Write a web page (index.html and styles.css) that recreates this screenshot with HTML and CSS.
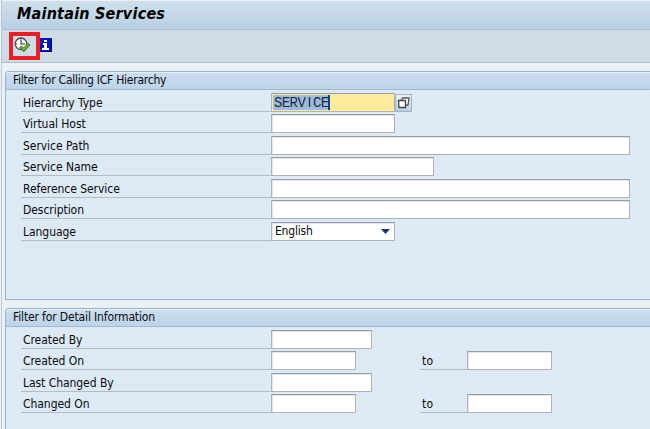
FILE: index.html
```
<!DOCTYPE html>
<html lang="en">
<head>
<meta charset="utf-8">
<title>Maintain Services</title>
<link rel="stylesheet" href="styles.css">
</head>
<body>
<div class="window">
  <h1 class="title">Maintain Services</h1>
  <div class="toolbar">
    <div class="execute">
      <svg width="17" height="16" viewBox="0 0 17 16">
        <circle cx="7" cy="6.8" r="5.8" fill="#fff" stroke="#4b4b48" stroke-width="1.3"/>
        <path d="M7 3v4h4M7 1.8v1M2 7h1M7 10.8v1" fill="none" stroke="#333" stroke-width="1.1"/>
        <path d="M6.3 9.6l3.4 3.3 5.4-6" fill="none" stroke="#3c6a26" stroke-width="3.4"/>
        <path d="M6.9 10.1l2.8 2.5 4.9-5.3" fill="none" stroke="#6eb43c" stroke-width="2"/>
      </svg>
    </div>
    <svg class="info" width="12" height="14" viewBox="0 0 12 14">
      <path fill="#0712c6" d="M0 0h12v14H0z"/>
      <path fill="#fff" d="M4 2h3v2H4zM3 5h4v5h2v2H2v-2h2V7H3z"/>
      <path fill="none" stroke="#000d68" d="M0 13.5h11.5V0"/>
    </svg>
  </div>
  <section class="panel hierarchy">
    <h2>Filter for Calling ICF Hierarchy</h2>
    <div class="rows">
      <div class="row"><label>Hierarchy Type</label><div class="field medium active"><span class="selected">SERV<span class="narrow">I</span>CE</span></div><div class="help"><svg width="13" height="12" viewBox="0 0 13 12"><path d="M4.5 3L5.5 1h6.500l-1 7H9" fill="#fff" stroke="#555" stroke-width="1.3"/><path d="M1.5 3.500h7v7h-6.500z" fill="#fff" stroke="#444" stroke-width="1.3"/></svg></div></div>
      <div class="row"><label>Virtual Host</label><div class="field medium"></div></div>
      <div class="row"><label>Service Path</label><div class="field full"></div></div>
      <div class="row"><label>Service Name</label><div class="field name"></div></div>
      <div class="row"><label>Reference Service</label><div class="field full"></div></div>
      <div class="row"><label>Description</label><div class="field full"></div></div>
      <div class="row"><label>Language</label><div class="field medium select"><span>English</span><svg width="9" height="5" viewBox="0 0 9 5"><path d="M0 0h9L4.5 5z" fill="#1c3566"/></svg></div></div>
    </div>
  </section>
  <section class="panel detail">
    <h2>Filter for Detail Information</h2>
    <div class="rows">
      <div class="row"><label>Created By</label><div class="field user"></div></div>
      <div class="row"><label>Created On</label><div class="field date"></div><label class="to">to</label><div class="field date"></div></div>
      <div class="row"><label>Last Changed By</label><div class="field user"></div></div>
      <div class="row"><label>Changed On</label><div class="field date"></div><label class="to">to</label><div class="field date"></div></div>
    </div>
  </section>
</div>
</body>
</html>
```
FILE: styles.css
```
* { box-sizing: border-box; }
body {
  margin: 0;
  height: 429px;
  overflow: hidden;
  background: #eaf0f4;
  color: #080b10;
  font: 12px/18px "DejaVu Sans Condensed", "DejaVu Sans", sans-serif;
  font-stretch: condensed;
}
svg { display: block; flex: none; }
.window {
  height: 429px;
  margin-left: 1px;
  border-left: 1px solid #b9c9d8;
  display: flex;
  flex-direction: column;
}
.title {
  margin: 1px 0 0;
  height: 29px;
  flex: none;
  padding: 0 0 0 15px;
  background: linear-gradient(#cfdeea, #b9d0e4);
  border-bottom: 1px solid #a3bdd3;
  font: italic bold 16px/26px "DejaVu Sans Condensed", "DejaVu Sans", sans-serif;
  letter-spacing: .22px;
  color: #000;
}
.toolbar {
  height: 33px;
  flex: none;
  display: flex;
  padding: 2px 0 0 7px;
  background: #cedce7;
  border-bottom: 1px solid #adbfce;
}
.execute {
  width: 31px;
  height: 28px;
  border: 4px solid #ed1c24;
  padding: 1px 0 0 1px;
}
.info { margin-top: 6px; }
.panel {
  margin-left: 3px;
  flex: none;
  background: #dde9f5;
  border: 1px solid #95b3d0;
  border-right: 0;
  border-top-left-radius: 4px;
}
.hierarchy { margin-top: 8px; height: 229px; }
.detail { margin-top: 8px; height: 121px; border-bottom: 0; }
.panel h2 {
  margin: 0;
  height: 18px;
  padding-left: 7px;
  background: linear-gradient(#cbddee, #bed4ea);
  border-top: 1px solid #e5eff8;
  border-bottom: 1px solid #9fb9d5;
  border-top-left-radius: 3px;
  font-weight: normal;
  font-size: 12px;
  line-height: 14px;
}
.hierarchy h2 { letter-spacing: -.25px; }
.detail h2 { letter-spacing: -.14px; }
.rows { padding: 0 0 0 15px; }
.row {
  display: flex;
  align-items: flex-end;
  height: 21.5px;
}
.row label {
  width: 250px;
  height: 18px;
  padding-left: 2px;
  border-bottom: 1px solid #b4bcc3;
  letter-spacing: -.05px;
}
.row label.to { width: 47px; margin-left: 64px; padding-left: 2px; letter-spacing: .2px; }
.field {
  height: 19px;
  background: #fff;
  border: 1px solid #aeb3b7;
  border-top-color: #989da1;
  box-shadow: inset 1px 1px #e3e6e8;
}
.medium { width: 124px; }
.full { width: 359px; }
.name { width: 163px; }
.user { width: 101px; }
.date { width: 85px; }
.active { background: #ffeb9c; padding: 1px 0 0 1px; box-shadow: none; }
.selected {
  display: block;
  width: 57px;
  height: 15px;
  padding-left: 1px;
  background: #9dbcdc;
  border-right: 2px solid #173d8c;
  font: 14px/15px "Liberation Mono", monospace;
  letter-spacing: -.6px;
  white-space: nowrap;
  color: #1b2c40;
}
.narrow {
  display: inline-block;
  width: 7.8px;
  text-align: center;
  font-family: "Liberation Sans", sans-serif;
}
.help {
  width: 17px;
  height: 18px;
  padding: 2px 0 0 1px;
  border: 1px solid #a7b5c4;
  background: linear-gradient(#e8f0f8, #b9cfe5);
}
.select {
  display: flex;
  justify-content: space-between;
  align-items: center;
  padding: 0 4px 0 3px;
  letter-spacing: -.2px;
}
```
